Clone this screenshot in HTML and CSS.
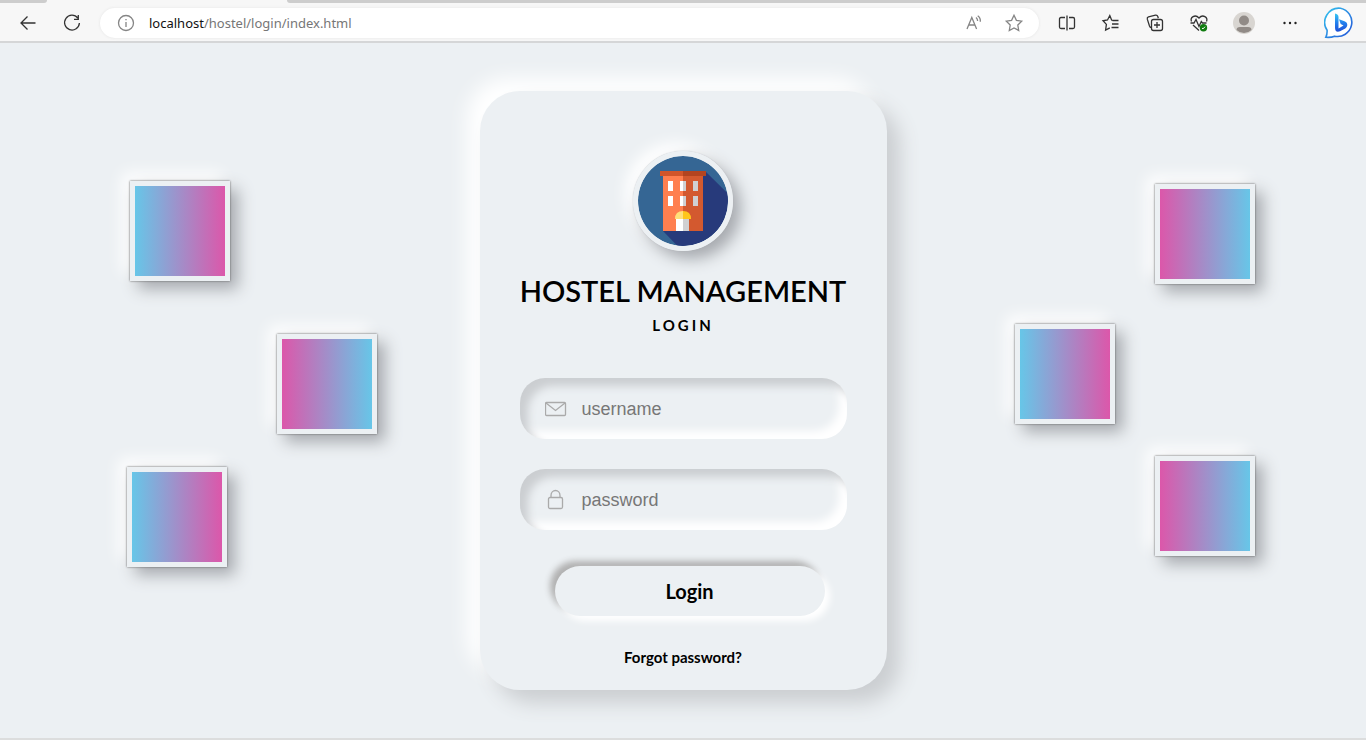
FILE: index.html
```html
<!DOCTYPE html>
<html lang="en">
<head>
<meta charset="utf-8">
<meta name="viewport" content="width=device-width, initial-scale=1">
<title>Hostel Management Login</title>
<link rel="stylesheet" href="styles.css">
</head>
<body>
<header class="browser">
  <div class="tabs"><span class="tab-prev"></span><span class="tab-active"></span><span class="tab-rest"></span></div>
  <div class="toolbar">
    <div class="nav">
      <button class="tool" aria-label="Back"><svg width="20" height="20" viewBox="0 0 20 20"><path d="M17.500 10H3M9.500 3.500 3 10l6.500 6.500"/></svg></button>
      <button class="tool" aria-label="Refresh"><svg width="20" height="20" viewBox="0 0 20 20"><path d="M15.800 5A7.400 7.400 0 1 0 17.400 10M16.300 2v4.300h-4.300"/></svg></button>
    </div>
    <div class="address">
      <svg class="info" width="18" height="18" viewBox="0 0 18 18"><circle cx="9" cy="9" r="7.500"/><path d="M9 8v5M9 5v1.300"/></svg>
      <p class="url"><span class="host">localhost</span>/hostel/login/index.html</p>
      <button class="tool pale" aria-label="Read aloud"><svg width="20" height="20" viewBox="0 0 20 20"><path d="M3 16 7.800 4.500 12.600 16M4.600 12h6.400M12 4.500q1.600 1.300 1.600 3.500M13.700 2.700q3 2.100 2.600 6"/></svg></button>
      <button class="tool pale" aria-label="Add to favorites"><svg width="20" height="20" viewBox="0 0 20 20"><path d="m10 2.300 2.400 5 5.300.8-3.900 3.900.9 5.500-4.700-2.600-4.700 2.600.9-5.500L2.300 8.100l5.300-.8z"/></svg></button>
    </div>
    <div class="actions">
      <button class="tool" aria-label="Split screen"><svg width="20" height="20" viewBox="0 0 20 20"><path d="M8 4.500H4Q2.500 4.500 2.500 6v8Q2.500 15.500 4 15.500h4M12 4.500h4q1.500 0 1.500 1.500v8q0 1.500-1.500 1.500h-4M10 2.500v15"/></svg></button>
      <button class="tool" aria-label="Favorites"><svg width="20" height="20" viewBox="0 0 20 20"><path d="M11.500 7.300 10.600 7 8.800 2.500 6.500 7l-4.500.8 3.400 3.600-.8 5.600L8.800 14.800M11.500 7.500h6M11 11h6.500M10.500 14.500h7"/></svg></button>
      <button class="tool" aria-label="Collections"><svg width="20" height="20" viewBox="0 0 20 20"><path d="M4.500 13 2.300 6.200q-.4-1.800 1.200-2.300l7-1.700q1.700-.3 2.300 1.300l.5 1.700M4.500 13q.5 1.500 1.700 1.500"/><rect x="6.500" y="6.500" width="11" height="11" rx="2"/><path d="M12 9v6M9 12h6"/></svg></button>
      <button class="tool" aria-label="Browser essentials"><svg width="20" height="20" viewBox="0 0 20 20"><path d="M2.500 8.500C.8 4.500 6 .6 10 5c4-4.400 9.200-.5 7.500 3.500M1.500 10H5l2-3.500 3 7 2.300-5L13.500 10h4M4 12l6 5.500"/><circle class="ok" cx="14.500" cy="14.800" r="3.700"/><path class="tick" d="m13 15 1 .9 2-2.200"/></svg></button>
      <button class="tool profile" aria-label="Profile"><svg width="22" height="22" viewBox="0 0 22 22"><circle cx="11" cy="11" r="11" fill="#d8d5d1"/><circle cx="11" cy="8.500" r="5" fill="#918b87"/><path d="M3.500 18q0-3 3.500-3h8q3.500 0 3.500 3A11 11 0 0 1 3.500 18z" fill="#918b87"/></svg></button>
      <button class="tool" aria-label="Settings and more"><svg width="20" height="20" viewBox="0 0 20 20"><g class="dots"><circle cx="4.500" cy="10" r="1.200"/><circle cx="10" cy="10" r="1.200"/><circle cx="15.500" cy="10" r="1.200"/></g></svg></button>
      <button class="tool bing" aria-label="Bing Chat"><svg width="32" height="32" viewBox="0 0 32 32"><defs><linearGradient id="ring" x1="0" y1="0" x2="1" y2="1"><stop offset="0" stop-color="#35c4ee"/><stop offset="1" stop-color="#2454d8"/></linearGradient><linearGradient id="bee" x1="0" y1="0" x2="0" y2="1"><stop offset="0" stop-color="#38c8f2"/><stop offset=".5" stop-color="#2381ed"/><stop offset="1" stop-color="#1d4fd6"/></linearGradient></defs><path d="M16.500 1.200a14.300 14.300 0 1 1-6 28Q7 30.800 1.800 30.300q1.500-3 1.300-7A14.300 14.300 0 0 1 16.500 1.200z" fill="#fff" stroke="url(#ring)" stroke-width="1.600"/><path d="M11 6.500q3.500.5 3.500 3.500v11.500l5-3-2.800-1.500-1.700-4.700 5.500 2q3 1.200 2.800 4-.2 2-2 3.200L16 24.300Q11 26 11 20.500z" fill="url(#bee)"/></svg></button>
    </div>
  </div>
</header>
<main class="stage">
  <span class="tile blue-pink t1"></span>
  <span class="tile pink-blue t2"></span>
  <span class="tile blue-pink t3"></span>
  <span class="tile pink-blue t4"></span>
  <span class="tile blue-pink t5"></span>
  <span class="tile pink-blue t6"></span>
  <form class="card">
    <svg class="logo" viewBox="0 0 90 90" role="img" aria-label="Hostel">
      <circle cx="45" cy="45" r="45" fill="#356694"/>
      <path d="M68 16 89.300 37A45 45 0 0 1 39 89.600L25 75z" fill="#273a7b"/>
      <path d="M25 20h20v55H25z" fill="#ff7f4f"/><path d="M45 20h20v55H45z" fill="#d3592f"/>
      <path d="M22 15h23v5H22z" fill="#d1552a"/><path d="M45 15h23v5H45z" fill="#b34420"/>
      <path d="M30 25h5v10h-5zM42 25h3v10h-3zM30 40h5v10h-5zM42 40h3v10h-3z" fill="#fff"/>
      <path d="M45 25h3v10h-3zM55 25h5v10h-5zM45 40h3v10h-3zM55 40h5v10h-5z" fill="#d0d0d2"/>
      <path d="M38 61h7v14h-7z" fill="#fff"/><path d="M45 61h6v14h-6z" fill="#d0d0d2"/>
      <path d="M37 63q0-8 8-8v8z" fill="#ffe07a"/><path d="M45 55q8 0 8 8h-8z" fill="#ffc61c"/>
    </svg>
    <h1 class="title">HOSTEL MANAGEMENT</h1>
    <p class="subtitle">LOGIN</p>
    <div class="fields">
      <label class="field">
        <svg width="22" height="22" viewBox="0 0 22 22"><rect x=".5" y="4.500" width="20" height="13" rx="1"/><path d="m1 5 9.500 7.500L20 5"/></svg>
        <input type="text" placeholder="username" aria-label="username">
      </label>
      <label class="field">
        <svg width="22" height="22" viewBox="0 0 22 22"><rect x="3.500" y="8.500" width="14" height="11" rx="1.500"/><path d="M6 8V6.500a4.500 5 0 0 1 9 0V8"/></svg>
        <input type="password" placeholder="password" aria-label="password">
      </label>
    </div>
    <button class="login" type="button">Login</button>
    <a class="forgot" href="#">Forgot password?</a>
  </form>
</main>
</body>
</html>
```
FILE: styles.css
```css
* {
  box-sizing: border-box;
}

body {
  margin: 0;
  min-height: 100vh;
  display: flex;
  flex-direction: column;
  background: #ecf0f3;
  font-family: Lato, sans-serif;
  color: #000;
}

h1,
p {
  margin: 0;
}

.browser {
  background: #f7f7f7;
  border-bottom: 2px solid #d5d6d7;
}

.tabs {
  display: flex;
  height: 3px;
}

.tab-prev {
  width: 47px;
  background: #cdcdcd;
  border-bottom-right-radius: 3px;
}

.tab-active {
  width: 240px;
}

.tab-rest {
  flex: 1;
  background: #cdcdcd;
  border-bottom-left-radius: 3px;
}

.toolbar {
  display: flex;
  align-items: center;
  height: 38px;
  padding: 2px 10px 0 18px;
}

.nav {
  display: flex;
  gap: 24px;
  margin-right: 18px;
}

.tool {
  display: flex;
  padding: 0;
  border: 0;
  background: none;
}

.tool svg,
.info {
  fill: none;
  stroke: #333;
  stroke-width: 1.3;
}

.tool .dots {
  fill: #222;
  stroke: none;
}

.tool .ok {
  fill: #107c10;
  stroke: none;
}

.tool .tick {
  stroke: #fff;
  stroke-width: 1;
}

.profile svg,
.bing svg {
  stroke: none;
}

.address {
  flex: 1;
  display: flex;
  align-items: center;
  gap: 20px;
  height: 30px;
  padding: 0 15px 0 17px;
  border-radius: 15px;
  background: #fff;
  box-shadow: 0 0 3px #e4e4e4;
}

.address .info,
.address .pale svg {
  stroke: #858585;
}

.url {
  flex: 1;
  margin-left: -6px;
  font: 13px/18px "Noto Sans", "Open Sans", sans-serif;
  color: #767676;
}

.host {
  color: #111;
}

.actions {
  display: flex;
  align-items: center;
  gap: 24px;
  margin-left: 18px;
}

.profile {
  margin-right: 1px;
}

.stage {
  flex: 1;
  position: relative;
  display: flex;
  align-items: center;
  justify-content: center;
  border-bottom: 2px solid #dcdddd;
}

.card {
  position: relative;
  display: flex;
  flex-direction: column;
  align-items: center;
  width: 407px;
  max-width: 100%;
  padding: 60px 40px 24px;
  border-radius: 40px;
  background: #ecf0f3;
  box-shadow: 13px 13px 20px #cbced1, -13px -13px 20px #fff;
}

.logo,
.tile {
  width: 100px;
  height: 100px;
  border: 5px solid #ecf0f3;
  box-shadow: 0 0 2px #5f5f5f, 8px 8px 15px #a7aaaf, -8px -8px 15px #fff;
}

.logo {
  border-radius: 50%;
  box-shadow: 0 0 1px #a7aaaf, 8px 8px 15px #a7aaaf, -8px -8px 15px #fff;
}

.title {
  margin-top: 22px;
  font-size: 29px;
  font-weight: 600;
  line-height: 36px;
  white-space: nowrap;
}

.subtitle {
  margin-top: 7px;
  font-size: 15px;
  font-weight: 700;
  line-height: 18px;
  letter-spacing: 3px;
}

.fields {
  display: grid;
  gap: 30px;
  width: 100%;
  margin-top: 44px;
}

.field {
  display: flex;
  align-items: center;
  gap: 15px;
  height: 61px;
  padding: 0 25px;
  border-radius: 25px;
  box-shadow: inset 8px 8px 8px #cbced1, inset -8px -8px 8px #fff;
}

.field svg {
  flex: none;
  fill: none;
  stroke: #aaa;
  stroke-width: 1.3;
}

.field input {
  flex: 1;
  min-width: 0;
  padding: 0;
  border: 0;
  outline: 0;
  background: none;
  font: 18px/24px "Liberation Sans", Arial, sans-serif;
  color: #555;
}

.field input::placeholder {
  color: #777;
}

.login {
  width: 270px;
  max-width: 100%;
  height: 50px;
  margin: 36px 0 0 13px;
  padding: 0;
  border: 0;
  border-radius: 25px;
  background: #ecf0f3;
  box-shadow: 5px 5px 7px #fff, -5px -5px 6px #b1b1b1;
  font: 700 20px/24px Lato, sans-serif;
  color: #000;
}

.forgot {
  margin-top: 32px;
  font-size: 15px;
  font-weight: 700;
  line-height: 18px;
  color: #000;
  text-decoration: none;
}

.tile {
  position: absolute;
}

.blue-pink {
  background: linear-gradient(to right, #67c6e8, #dc57aa) padding-box;
}

.pink-blue {
  background: linear-gradient(to right, #dc57aa, #67c6e8) padding-box;
}

.t1 {
  left: 130px;
  top: 138px;
}

.t2 {
  left: 277px;
  top: 291px;
}

.t3 {
  left: 127px;
  top: 424px;
}

.t4 {
  right: 111px;
  top: 141px;
}

.t5 {
  right: 251px;
  top: 281px;
}

.t6 {
  right: 111px;
  top: 413px;
}
```
